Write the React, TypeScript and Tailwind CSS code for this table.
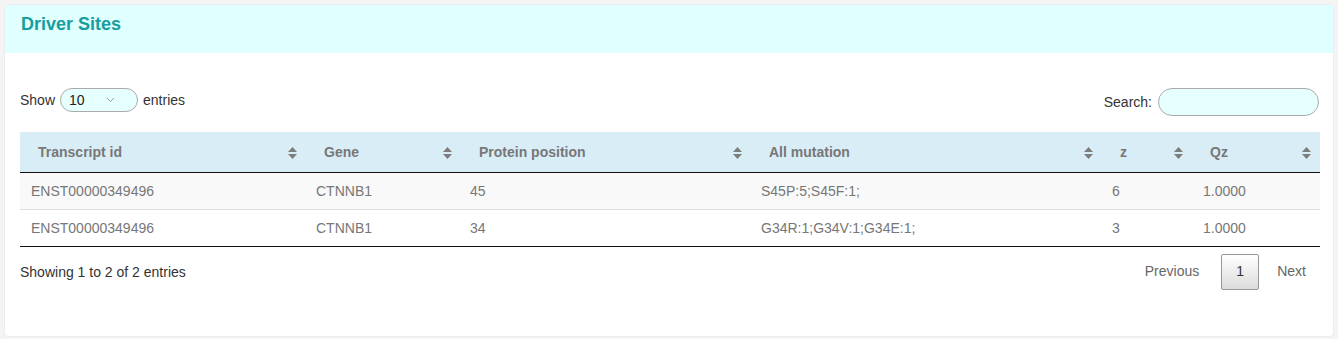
import React from 'react';

type Row = {
  transcript: string;
  gene: string;
  position: string;
  mutation: string;
  z: string;
  qz: string;
};

const rows: Row[] = [
  { transcript: 'ENST00000349496', gene: 'CTNNB1', position: '45', mutation: 'S45P:5;S45F:1;', z: '6', qz: '1.0000' },
  { transcript: 'ENST00000349496', gene: 'CTNNB1', position: '34', mutation: 'G34R:1;G34V:1;G34E:1;', z: '3', qz: '1.0000' },
];

const columns = [
  { label: 'Transcript id', width: 'w-[286px]' },
  { label: 'Gene', width: 'w-[155px]' },
  { label: 'Protein position', width: 'w-[290px]' },
  { label: 'All mutation', width: 'w-[351px]' },
  { label: 'z', width: 'w-[90px]' },
  { label: 'Qz', width: 'w-[128px]' },
];

const SortIcon = () => (
  <svg width="9" height="12" viewBox="0 0 9 12" className="shrink-0">
    <path d="M4.5 0 L9 5 L0 5 Z" fill="#7d7d7d" />
    <path d="M0 7 L9 7 L4.5 12 Z" fill="#7d7d7d" />
  </svg>
);

export default function App() {
  return (
    <div className="h-[339px] bg-[#f4f4f4] p-1 font-['Liberation_Sans',Arial,sans-serif]">
      <div className="h-[333px] bg-white rounded border border-[#ececec] overflow-hidden">
        <div className="h-12 bg-[#e0ffff] px-4 pt-[7px]">
          <h2 className="text-[18px] leading-6 font-bold text-[#179e9e]">Driver Sites</h2>
        </div>

        <div className="pl-[15px] pr-[14px] pt-[35px]">
          <div className="flex items-center justify-between h-7 text-[14px] text-[#333]">
            <div className="flex items-center gap-[5px] -mt-[4px]">
              <span>Show</span>
              <div className="w-[78px] h-6 rounded-full border border-[#aaa] bg-[#e6ffff] flex items-center justify-between pl-[8px] pr-[22px]">
                <span className="text-[#222]">10</span>
                <svg width="9" height="6" viewBox="0 0 9 6">
                  <path d="M1 1 L4.5 4.5 L8 1" stroke="#9a9a9a" strokeWidth="1" fill="none" />
                </svg>
              </div>
              <span>entries</span>
            </div>
            <div className="flex items-center gap-[6px]">
              <span>Search:</span>
              <div className="w-[161px] h-7 rounded-full border border-[#aaa] bg-[#e6ffff]" />
            </div>
          </div>

          <table className="mt-4 w-[1300px] border-collapse table-fixed text-[14px]">
            <thead>
              <tr className="bg-[#d9edf7] border-b border-[#111]">
                {columns.map((c) => (
                  <th key={c.label} className={`${c.width} h-10 pl-[18px] pr-[9px] pt-[2px] text-left font-bold text-[#777]`}>
                    <div className="flex items-center justify-between">
                      <span>{c.label}</span>
                      <SortIcon />
                    </div>
                  </th>
                ))}
              </tr>
            </thead>
            <tbody className="text-[#777]">
              {rows.map((r, i) => (
                <tr
                  key={i}
                  className={`${i === 0 ? 'bg-[#f9f9f9] border-b border-[#ddd]' : 'bg-white border-b border-[#111]'} h-[37px]`}
                >
                  <td className="px-[11px] pt-[2px]">{r.transcript}</td>
                  <td className="px-[10px] pt-[2px]">{r.gene}</td>
                  <td className="px-[9px] pt-[2px]">{r.position}</td>
                  <td className="px-[10px] pt-[2px]">{r.mutation}</td>
                  <td className="px-[10px] pt-[2px]">{r.z}</td>
                  <td className="px-[11px] pt-[2px]">{r.qz}</td>
                </tr>
              ))}
            </tbody>
          </table>

          <div className="mt-[7px] flex items-center justify-between text-[14px] text-[#333]">
            <span className="mt-[1px]">Showing 1 to 2 of 2 entries</span>
            <div className="flex items-center">
              <span className="px-[14px] text-[#666]">Previous</span>
              <span className="w-[38px] h-[36px] flex items-center justify-center rounded-[2px] border border-[#979797] bg-gradient-to-b from-white to-[#dcdcdc] text-[#333] ml-[8px]">
                1
              </span>
              <span className="pl-[18px] pr-[13px] text-[#666]">Next</span>
            </div>
          </div>
        </div>
      </div>
    </div>
  );
}
